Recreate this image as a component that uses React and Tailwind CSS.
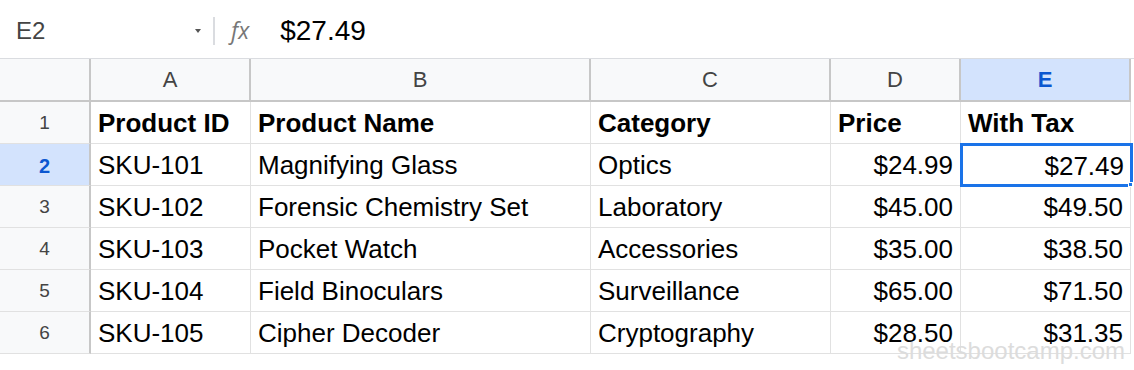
import React from 'react'

const rows = [
  ['SKU-101', 'Magnifying Glass', 'Optics', '$24.99', '$27.49'],
  ['SKU-102', 'Forensic Chemistry Set', 'Laboratory', '$45.00', '$49.50'],
  ['SKU-103', 'Pocket Watch', 'Accessories', '$35.00', '$38.50'],
  ['SKU-104', 'Field Binoculars', 'Surveillance', '$65.00', '$71.50'],
  ['SKU-105', 'Cipher Decoder', 'Cryptography', '$28.50', '$31.35'],
]

const cols = ['A', 'B', 'C', 'D', 'E']

const App = () => {
  return (
    <div className="relative w-[1134px] h-[370px] bg-white overflow-hidden" style={{ fontFamily: '"Liberation Sans", Arial, sans-serif' }}>
      {/* formula bar */}
      <div className="flex items-center h-[59px] pt-[3px] border-b border-[#dadce0]">
        <div className="w-[213px] flex items-center justify-between pl-4 pr-3">
          <span className="text-[24px] text-[#444]">E2</span>
          <span className="w-0 h-0 border-l-[3px] border-r-[3px] border-t-[4px] border-l-transparent border-r-transparent border-t-[#555] mt-[1px]" />
        </div>
        <div className="w-[2px] h-[28px] bg-[#dadce0]" />
        <span className="ml-[16px] text-[23px] italic text-[#777]" style={{ fontFamily: '"Open Sans", sans-serif' }}>fx</span>
        <span className="ml-[31px] text-[28px] text-black">$27.49</span>
      </div>

      {/* grid */}
      <div className="grid grid-cols-[91px_160px_340px_240px_130px_170px] text-[26px] text-black">
        <div className="h-[43px] bg-[#f8f9fa] border-r-2 border-b-2 border-[#c7c7c7]" />
        {cols.map((c) => (
          <div
            key={c}
            className={
              c === 'E'
                ? 'h-[43px] bg-[#d3e3fd] border-r-2 border-b-2 border-[#c7c7c7] flex items-center justify-center text-[22px] font-bold text-[#0b57d0]'
                : 'h-[43px] bg-[#f8f9fa] border-r-2 border-b-2 border-[#c7c7c7] flex items-center justify-center text-[22px] text-[#444]'
            }
          >
            {c}
          </div>
        ))}

        {/* header row 1 */}
        <div className="h-[42px] pt-[2px] bg-[#f8f9fa] border-r-2 border-b border-r-[#c7c7c7] border-b-[#e1e1e1] flex items-center justify-center text-[19px] text-[#444]">1</div>
        {['Product ID', 'Product Name', 'Category', 'Price', 'With Tax'].map((h) => (
          <div key={h} className="h-[42px] pt-[2px] border-r border-b border-[#e1e1e1] flex items-center px-[7px] font-bold">
            {h}
          </div>
        ))}

        {rows.map((r, i) => {
          const n = i + 2
          const sel = n === 2
          return (
            <React.Fragment key={n}>
              <div
                className={
                  sel
                    ? 'h-[42px] pt-[2px] bg-[#d3e3fd] border-r-2 border-b border-r-[#c7c7c7] border-b-[#e1e1e1] flex items-center justify-center text-[20px] font-bold text-[#0b57d0]'
                    : 'h-[42px] pt-[2px] bg-[#f8f9fa] border-r-2 border-b border-r-[#c7c7c7] border-b-[#e1e1e1] flex items-center justify-center text-[19px] text-[#444]'
                }
              >
                {n}
              </div>
              <div className="h-[42px] pt-[2px] border-r border-b border-[#e1e1e1] flex items-center px-[7px]">{r[0]}</div>
              <div className="h-[42px] pt-[2px] border-r border-b border-[#e1e1e1] flex items-center px-[7px]">{r[1]}</div>
              <div className="h-[42px] pt-[2px] border-r border-b border-[#e1e1e1] flex items-center px-[7px]">{r[2]}</div>
              <div className="h-[42px] pt-[2px] border-r border-b border-[#e1e1e1] flex items-center justify-end px-[7px]">{r[3]}</div>
              {sel ? (
                <div className="relative h-[44px] w-[173px] pt-[2px] border-[3px] border-[#1a73e8] -mt-px -ml-px -mb-px flex items-center justify-end pr-[6px] z-10">
                  {r[4]}
                  <span className="absolute -right-[3px] -bottom-[3px] w-[5px] h-[5px] bg-[#1a73e8] border border-white" />
                </div>
              ) : (
                <div className="h-[42px] pt-[2px] border-r border-b border-[#e1e1e1] flex items-center justify-end px-[7px]">{r[4]}</div>
              )}
            </React.Fragment>
          )
        })}
      </div>

      <span className="absolute right-[9px] bottom-[1px] text-[24px] text-[#dcdcdc]">sheetsbootcamp.com</span>
    </div>
  )
}

export default App
